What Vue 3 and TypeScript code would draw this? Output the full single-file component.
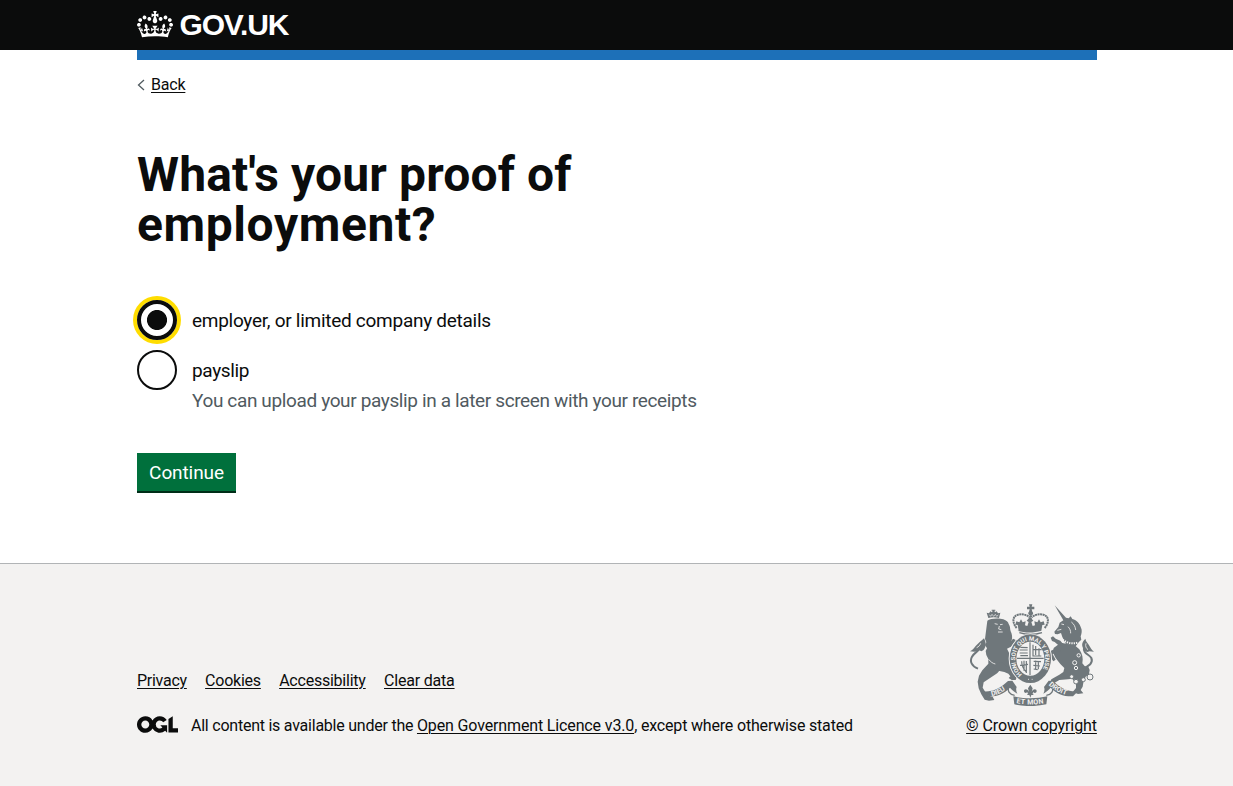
<script setup lang="ts">
import { ref } from 'vue'

interface Proof {
  value: string
  label: string
  hint?: string
}

const proofs: Proof[] = [
  { value: 'employer', label: 'employer, or limited company details' },
  {
    value: 'payslip',
    label: 'payslip',
    hint: 'You can upload your payslip in a later screen with your receipts',
  },
]
const selected = ref<string>('employer')
const links: { text: string; cls: string }[] = [
  { text: 'Privacy', cls: 'privacy' },
  { text: 'Cookies', cls: 'cookies' },
  { text: 'Accessibility', cls: 'accessibility' },
  { text: 'Clear data', cls: 'clear' },
]
</script>

<template>
  <div class="page">
    <header class="header">
      <div class="container header-inner">
        <svg class="crown" viewBox="0 0 132 97" aria-hidden="true">
          <path d="M25 30.2c3.5 1.5 7.7-.2 9.1-3.7 1.5-3.6-.2-7.8-3.9-9.2-3.6-1.4-7.6.3-9.1 3.9-1.4 3.5.3 7.5 3.9 9zM9 39.5c3.6 1.5 7.8-.2 9.2-3.7 1.5-3.6-.2-7.8-3.9-9.1-3.6-1.5-7.6.2-9.1 3.8-1.4 3.5.3 7.5 3.8 9zM4.4 57.2c3.5 1.5 7.7-.2 9.1-3.8 1.5-3.6-.2-7.7-3.9-9.1-3.5-1.5-7.6.3-9.1 3.8-1.4 3.5.3 7.6 3.9 9.1zm38.3-21.4c3.5 1.5 7.7-.2 9.1-3.8 1.5-3.6-.2-7.7-3.9-9.1-3.6-1.5-7.6.3-9.1 3.8-1.3 3.6.4 7.7 3.9 9.1zm64.4-5.6c-3.6 1.5-7.8-.2-9.1-3.7-1.5-3.6.2-7.8 3.8-9.2 3.6-1.4 7.7.3 9.2 3.9 1.3 3.5-.4 7.5-3.9 9zm15.9 9.3c-3.6 1.5-7.7-.2-9.1-3.7-1.5-3.6.2-7.8 3.7-9.1 3.6-1.5 7.7.2 9.2 3.8 1.5 3.5-.3 7.5-3.8 9zm4.7 17.7c-3.6 1.5-7.8-.2-9.2-3.8-1.5-3.6.2-7.7 3.9-9.1 3.6-1.5 7.7.3 9.2 3.8 1.3 3.5-.4 7.6-3.9 9.1zM89.3 35.8c-3.6 1.5-7.8-.2-9.2-3.8-1.4-3.6.2-7.7 3.9-9.1 3.6-1.5 7.7.3 9.2 3.8 1.4 3.6-.3 7.7-3.9 9.1zM69.7 17.7l8.9 4.7V9.3l-8.9 2.8c-.2-.3-.5-.6-.9-.9L72.4 0H59.6l3.5 11.2c-.3.3-.6.5-.9.9l-8.8-2.8v13.1l8.8-4.7c.3.3.6.7.9.9l-5 15.4v.1c-.2.8-.4 1.6-.4 2.4 0 4.1 3.1 7.5 7 8.1h.2c.3 0 .7.1 1 .1.4 0 .7 0 1-.1h.2c4-.6 7.1-4.1 7.1-8.1 0-.8-.1-1.7-.4-2.4V34l-5.1-15.4c.4-.2.7-.6 1-.9zM66 92.8c16.9 0 32.8 1.1 47.1 3.2 4-16.9 8.9-26.7 14-33.5l-9.6-3.4c1 4.9 1.1 7.2 0 10.2-1.5-1.4-3-4.3-4.2-8.7L108.6 76c2.8-2 5-3.2 7.5-3.3-4.4 9.4-10 11.9-13.6 11.2-4.3-.8-6.3-4.6-5.6-7.9 1-4.7 5.7-5.9 8-.5 4.3-8.7-3-11.4-7.6-8.8 7.1-7.2 7.9-13.5 2.1-21.1-8 6.1-8.1 12.3-4.5 20.8-4.7-5.4-12.1-2.5-9.5 6.2 3.4-5.2 7.9-2 7.2 3.1-.6 4.3-6.4 7.8-13.5 7.2-10.3-.9-10.9-8-11.2-13.8 2.5-.5 7.1 1.8 11 7.3L80.2 60c-4.1 4.4-8 5.3-12.3 5.4 1.4-4.4 8-11.6 8-11.6H55.5s6.4 7.2 7.9 11.6c-4.2-.1-8-1-12.3-5.4l1.4 16.4c3.9-5.5 8.5-7.7 10.9-7.3-.3 5.8-.9 12.8-11.1 13.8-7.2.6-12.9-2.9-13.5-7.2-.7-5 3.8-8.3 7.1-3.1 2.7-8.7-4.6-11.6-9.4-6.2 3.7-8.5 3.6-14.7-4.6-20.8-5.8 7.6-5 13.9 2.2 21.1-4.7-2.6-11.9.1-7.7 8.8 2.3-5.5 7.1-4.2 8.1.5.7 3.3-1.3 7.1-5.7 7.9-3.5.7-9-1.8-13.5-11.2 2.5.1 4.7 1.3 7.5 3.3l-4.7-15.4c-1.2 4.4-2.7 7.2-4.3 8.7-1.1-3-.9-5.3 0-10.2l-9.5 3.4c5 6.9 9.9 16.7 14 33.5 14.8-2.1 30.8-3.2 47.7-3.2z" />
        </svg>
        <span class="logotype">GOV.UK</span>
      </div>
    </header>
    <div class="container"><div class="bar"></div></div>

    <main class="container main">
      <a class="back">
        <svg class="chevron" viewBox="0 0 8 12" aria-hidden="true"><path d="M7 1 1.5 6 7 11" /></svg>
        <span class="link back-text">Back</span>
      </a>
      <h1 class="title">
        <span class="title-a">What's your proof of</span><br />
        <span class="title-b">employment?</span>
      </h1>
      <div class="radios">
        <div v-for="p in proofs" :key="p.value" class="item" @click="selected = p.value">
          <span class="radio" :class="{ checked: selected === p.value }"></span>
          <div class="texts">
            <div class="label"><span :class="p.value">{{ p.label }}</span></div>
            <div v-if="p.hint" class="hint"><span>{{ p.hint }}</span></div>
          </div>
        </div>
      </div>
      <button class="button" type="button">Continue</button>
    </main>

    <footer class="footer">
      <div class="container meta">
        <div class="meta-left">
          <nav class="links">
            <a v-for="l in links" :key="l.text" class="link" :class="l.cls">{{ l.text }}</a>
          </nav>
          <div class="licence">
            <svg class="ogl" viewBox="0 0 483.2 195.7" aria-hidden="true">
              <path d="M421.5 142.8V.1l-50.7 32.3v161.1h112.4v-50.7zm-122.3-9.6A47.12 47.12 0 0 1 221 97.8c0-26 21.1-47.1 47.1-47.1 16.7 0 31.4 8.7 39.7 21.8l42.7-27.2A97.63 97.63 0 0 0 268.1 0c-36.5 0-68.3 20.1-85.1 49.7A98 98 0 0 0 97.8 0C43.9 0 0 43.9 0 97.8s43.9 97.8 97.8 97.8c36.5 0 68.3-20.1 85.1-49.7a97.76 97.76 0 0 0 149.6 25.4l19.4 22.2h3v-87.8h-80l24.3 27.5zM97.8 145c-26 0-47.1-21.1-47.1-47.1s21.1-47.1 47.1-47.1 47.1 21.1 47.1 47.1S123.8 145 97.8 145" />
            </svg>
            <span class="lic-a">All content is available under the&nbsp;</span>
            <a class="link lic-b">Open Government Licence v3.0</a>
            <span class="lic-c">, except where otherwise stated</span>
          </div>
        </div>
        <a class="copyright">
          <svg class="arms" viewBox="25 24 375 306" aria-hidden="true">
            <!-- lion -->
            <path class="f" d="M80 74c8-7 34-9 48-4 9 4 15 8 16 14 6 8 3 14 6 22 4 8 5 16 4 24l-3 6 6-8 7 3 3 7-8 4-8 10-12 6 6 12 6 20-2 12c2 8 6 12 10 16l4 10-8 3-12-10-14-8-10 2c-2 8-6 15-14 20l-18 12-18 12-3 16 8 13 10 11 12 3 5 10-16 2-13-3-10-16-8-18-3-20 4-18 10-16 18-20 0-14-6-12-2-12 4-8-6-10 4-8-4-10z" />
            <path class="f" d="M102 208l22-10 12 12 14 6 10 14 8 14-3 8-12 0-9-6 5-5-6-8-12-5-18-4-14-8z" />
            <path class="s tail" d="M52 218c-18-6-26-22-18-36 8-14 26-18 28-36" />
            <path class="f" d="M70 127c5 10 8 20 2 30-4 8-10 11-16 6-8 6-20 4-28 3 8-4 12-10 17-16 8-9 16-14 25-23z" />
            <path class="l" d="M48 155c6-3 10-7 12-13M102 83l9 2M118 86l8-1M116 90l-2 9 8 2M112 108h14M84 190c6 8 12 12 20 14" />
            <path class="f" d="M83 66l-5-16 7 2 4-6 5 3 2-5h-3v-3h11v3h-3l2 5 5-3 4 6 7-2-4 16c-10-3-22-3-32 0z" />
            <path class="l thin" d="M86 56l4 5 4-6 5 6 5-6 4 6 5-4" />
            <!-- unicorn -->
            <path class="f" d="M282 28l34 37 8 2 6-6 5 8c14 4 22 14 26 26 4 8 2 18-1 26l2 10-8 8-9 12-30-8-10-20-4-12-10 4-8-1-2-7 12-14 4-13 11-7z" />
            <path class="l" d="M302 84l8 2M290 103l12-3M332 78c8 6 12 14 13 24M322 92c6 6 8 12 8 20" />
            <path class="f" d="M300 140l42 8 14 12c9 14 12 26 9 42l10 12 8-2 4 10-2 12-10 8-6 12-3 18-6 10 8 10-16 2-16-6 10-12 0-14-12-14-12 2-26 2-14 8-5 10-10-8 5-12 24-14 12-8 3-12-12-12-14-18-8-16 2-14z" />
            <path class="f" d="M296 150l-14-12-8-3-4-10 7-4 8 7 14 6 10 12zM300 166l-14 2-10 7 9 16-7 5-12-18 2-12 18-9z" />
            <path class="s tail" d="M366 216c20-4 32-16 26-30-6-12-26-12-22-34" />
            <path class="f" d="M374 128c-8 8-12 16-8 26 4 12 12 17 20 12l14 1c-8-6-10-12-14-18-4-8-10-11-12-21z" />
            <path class="l" d="M376 142c-3 9 1 15 6 19" />
            <path class="l beaded" d="M296 122c14 16 34 24 54 18" />
            <g class="ring">
              <circle class="cut" cx="354" cy="178" r="5" /><circle class="cut" cx="342" cy="200" r="6" />
              <circle class="cut" cx="346" cy="216" r="5" />
              <circle cx="333" cy="242" r="6" /><circle cx="346" cy="257" r="7" />
              <circle cx="368" cy="251" r="6" /><circle cx="388" cy="243" r="9" />
            </g>
            <!-- crown above the shield -->
            <path class="f" d="M205 25h10l-2 7h8v8h-8l2 7a7 7 0 1 1-10 0l2-7h-8v-8h8zM174 104l-3-17-7-1 3-10 9 3 5-9 5 9 9-3-2 12 7 2 4-12-6-4 10-12 10 12-6 4 4 12 7-2-2-12 9 3 5-9 5 9 9-3 3 10-7 1-3 17c-24 7-48 7-72 0z" />
            <path class="beads" d="M168 96c-14-16-13-36 4-40 12-3 26 0 35 8M252 96c14-16 13-36-4-40-12-3-26 0-35 8M210 58v14" />
            <path class="s" d="M176 110c22 7 46 7 68 0" />
            <!-- garter and quartered shield -->
            <ellipse class="bg" cx="209" cy="188" rx="65" ry="75" />
            <ellipse class="f" cx="209" cy="188" rx="62" ry="73" />
            <ellipse class="inner" cx="209" cy="188" rx="42" ry="51" />
            <g transform="translate(-1 6)">
              <path class="s hair" d="M170 181h80M209 133v98M180 148l22 1M178 156h24M178 165h24M180 173h23M218 140v34h25M226 144v27M236 151v22M217 155h27M184 190c0 14 5 24 14 32M191 188v30M198 189v36M179 202l24-3M220 190l22 1M219 202l20 2M220 213l12 2M226 188v28M234 190v24" />
            </g>
            <path id="garter-text" class="none" d="M184 235A45 55 0 1 1 236 233" />
            <text class="motto"><textPath href="#garter-text">HONI SOIT QUI MAL Y PENSE</textPath></text>
            <path class="l" d="M202 250h3M213 250h3" />
            <!-- motto ribbon -->
            <path class="f" d="M67 286c26 3 52-9 75-31l13-1 13 19c-3 7-1 14 2 20-10-5-17-13-22-18-17 18-39 27-64 26zM352 286c-26 3-52-9-75-31l-13-1-14 19c3 7 1 14-2 20 10-5 17-13 22-18 17 18 39 27 67 26z" />
            <path class="s" d="M144 270c-4 16 2 26 18 28M275 270c4 16-2 26-18 28" />
            <path class="f" d="M158 301c32 8 70 8 102 0l-3 24c-30 7-66 7-96 0z" />
            <path id="ribbon-left" class="none" d="M93 300C115 296 132 286 155 265" />
            <path id="ribbon-mid" class="none" d="M167 321C194 327 224 327 257 321" />
            <path id="ribbon-right" class="none" d="M264 267C281 283 303 295 332 301" />
            <text class="words"><textPath href="#ribbon-left">DIEU</textPath></text>
            <text class="words mid"><textPath href="#ribbon-mid">ET MON</textPath></text>
            <text class="words"><textPath href="#ribbon-right">DROIT</textPath></text>
            <path class="f" d="M209 266l7 11-3 11c2-10 16-12 15-2-1 6-8 6-9 2l-4 5h3v4h-6l-3 8-3-8h-6v-4h3l-4-5c-1 4-8 4-9-2-1-10 13-8 15 2l-3-11z" />
          </svg>
          <span class="copy-text">© Crown copyright</span>
        </a>
      </div>
    </footer>
  </div>
</template>

<style>
body {
  background: #f3f2f1;
  overflow: hidden;
}
</style>

<style scoped>
.page {
  height: 786px;
  display: flex;
  flex-direction: column;
  overflow: hidden;
  background: #fff;
  color: #0b0c0c;
  font-family: Roboto, "Liberation Sans", sans-serif;
  font-size: 16px;
  line-height: 20px;
}
.container { width: 961px; margin: 0 auto; padding-left: 1px; box-sizing: border-box; }
.header { height: 50px; background: #0b0c0c; flex: none; }
.header-inner { display: flex; padding-top: 11px; }
.crown { width: 36px; height: 26.5px; fill: #fff; }
.logotype {
  margin-left: 6.5px;
  color: #fff;
  font: 700 30px/28px "Liberation Sans", Arial, sans-serif;
  letter-spacing: -1.15px;
}
.bar { height: 10px; background: #1d70b8; }
.main { flex: none; height: 503px; display: flex; flex-direction: column; align-items: flex-start; }
.back { display: flex; align-items: center; margin-top: 15px; height: 20px; }
.back-text { letter-spacing: -0.2px; }
.chevron { width: 8px; height: 12px; margin: 0 6px 0 0; fill: none; stroke: #505a5f; stroke-width: 1.3; }
.link, .copy-text { text-decoration: underline; text-decoration-thickness: 1px; text-underline-offset: 2px; white-space: nowrap; }
.title { margin: 55px 0 50px; font-size: 48px; line-height: 50px; font-weight: 700; white-space: nowrap; }
.title-a { letter-spacing: 0.14px; }
.title-b { letter-spacing: 0.6px; }
.radios { display: flex; flex-direction: column; gap: 10px; }
.item { display: flex; align-items: flex-start; gap: 15px; font-size: 19px; line-height: 25px; }
.radio { width: 40px; height: 40px; box-sizing: border-box; border: 2px solid #0b0c0c; border-radius: 50%; background: #fff; flex: none; }
.radio.checked {
  border-width: 4px;
  box-shadow: 0 0 0 4px #fd0;
  background: radial-gradient(circle, #0b0c0c 9.6px, #fff 10.4px);
}
.label { padding: 8px 0 7px; white-space: nowrap; }
.employer { letter-spacing: -0.275px; }
.payslip { letter-spacing: -0.35px; }
.hint { margin-top: -2px; color: #505a5f; white-space: nowrap; letter-spacing: -0.368px; }
.button {
  margin: 40px 0 0;
  width: 99px;
  height: 38px;
  padding: 2px 0 0;
  border: 0;
  background: #00703c;
  box-shadow: 0 2px 0 #002d18;
  color: #fff;
  font: 400 19px/36px Roboto, sans-serif;
  letter-spacing: -0.1px;
}
.footer { flex: 1; border-top: 1px solid #b1b4b6; background: #f3f2f1; padding-top: 40px; }
.meta { display: flex; justify-content: space-between; align-items: flex-end; }
.links { display: flex; gap: 18.3px; margin-bottom: 25px; }
.privacy { letter-spacing: -0.27px; }
.cookies { letter-spacing: -0.24px; }
.accessibility { letter-spacing: -0.23px; }
.clear { letter-spacing: -0.2px; }
.licence { display: flex; white-space: nowrap; }
.lic-a { letter-spacing: -0.235px; }
.lic-b { letter-spacing: -0.14px; }
.lic-c { letter-spacing: -0.18px; }
.ogl { width: 41px; height: 17px; margin-right: 13px; fill: #0b0c0c; }
.copyright { display: flex; flex-direction: column; align-items: center; gap: 10px; width: 131px; }
.copy-text { letter-spacing: -0.1px; }
.arms { width: 125px; height: 102px; }
.f { fill: #6f777b; }
.bg { fill: #f3f2f1; }
.inner { fill: #f3f2f1; }
.s { fill: none; stroke: #6f777b; stroke-width: 4; }
.tail { stroke-width: 6; }
.hair { stroke-width: 3.5; }
.l { fill: none; stroke: #f3f2f1; stroke-width: 2.5; }
.thin { stroke-width: 2; }
.beaded { stroke-width: 6; stroke-dasharray: 4 3; }
.none { fill: none; }
.ring { fill: #f3f2f1; stroke: #6f777b; stroke-width: 3; }
.cut { fill: none; stroke: #f3f2f1; }
.beads { fill: none; stroke: #6f777b; stroke-width: 6; stroke-dasharray: 6 1.5; }
.motto { font: 700 18px Roboto, sans-serif; fill: #f3f2f1; }
.words { font: 700 21px Roboto, sans-serif; fill: #f3f2f1; }
.mid { letter-spacing: 1px; }
</style>
